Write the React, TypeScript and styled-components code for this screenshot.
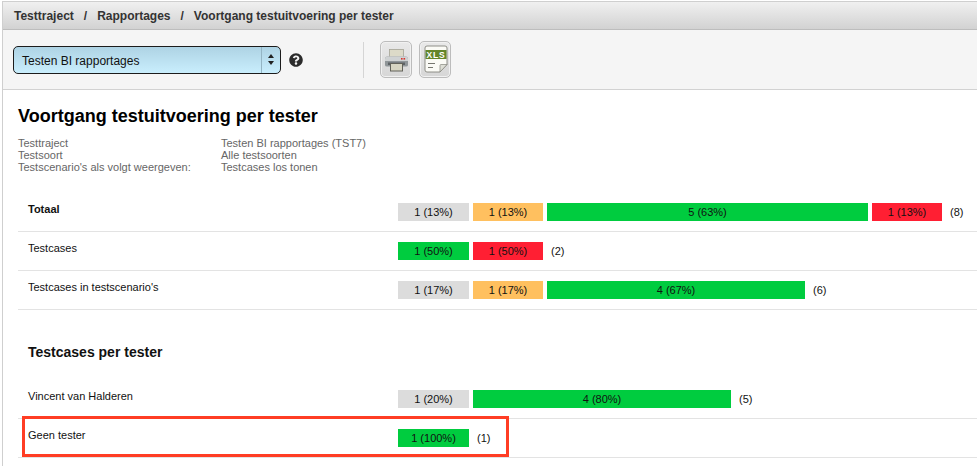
import React from "react";
import styled, { createGlobalStyle } from "styled-components";
import { FaQuestionCircle } from "react-icons/fa";

const Global = createGlobalStyle`
  html, body { margin: 0; padding: 0; background: #fff; }
  body { font-family: "Liberation Sans", Arial, sans-serif; font-size: 11px; color: #111; overflow: hidden; }
`;

const Page = styled.div`
  width: 977px; height: 466px; box-sizing: border-box; position: relative; overflow: hidden;
  padding-left: 2px; padding-top: 1px;
`;
const Frame = styled.div`
  border-left: 1px solid #cfcfcf; border-top: 1px solid #cfcfcf; height: 100%;
`;
const Crumbs = styled.div`
  height: 28px; box-sizing: border-box; display: flex; align-items: center; padding-left: 11px;
  background: linear-gradient(#f0f0f0, #d2d2d2); border-bottom: 1px solid #bdbdbd;
  font-weight: bold; font-size: 12px; color: #333; white-space: pre;
`;
const Sep = styled.span` margin: 0 10px; `;
const Toolbar = styled.div`
  height: 60px; box-sizing: border-box; background: #f5f5f5; border-bottom: 1px solid #d2d2d2;
  display: flex; align-items: center; padding-left: 10px;
`;
const Select = styled.div`
  width: 268px; height: 28px; box-sizing: border-box; border: 1px solid #1c1c1c; border-radius: 5px;
  background: linear-gradient(#aed3e4, #c9eefd); display: flex; align-items: stretch;
  font-size: 12px; color: #111;
`;
const SelectText = styled.div` flex: 1; display: flex; align-items: center; padding: 2px 0 0 8px; `;
const SelectArrows = styled.div`
  width: 18px; border-left: 1px solid #94b5c4; display: flex; align-items: center; justify-content: center;
`;
const Help = styled.div`
  margin-left: 8px; width: 14px; height: 14px; color: #2b2b2b; display: flex; font-size: 14px;
`;
const Divider = styled.div` width: 1px; height: 36px; background: #d5d5d5; margin: 0 16px 0 60px; `;
const IconButton = styled.div`
  width: 32px; height: 37px; box-sizing: border-box; margin-right: 7px; border: 1px solid #bcbcbc; border-radius: 5px;
  background: linear-gradient(#e9e9e9, #d6d6d6); box-shadow: inset 0 0 0 1px #f1f1f1;
  display: flex; align-items: center; justify-content: center;
`;
const Content = styled.div` padding: 0 0 0 15px; `;
const Title = styled.h1`
  margin: 15px 0 0; font-size: 18px; line-height: 22px; font-weight: bold; color: #000;
`;
const Meta = styled.div`
  margin-top: 10px; display: grid; grid-template-columns: 203px 1fr; font-size: 11px; line-height: 12px; color: #666;
`;
const Rows = styled.div` margin-top: 20px; `;
const Row = styled.div`
  height: 39px; box-sizing: border-box; display: flex; align-items: flex-start; padding-top: 10px;
  border-bottom: 1px solid #e3e3e3;
`;
const RowLabel = styled.div<{ $bold?: boolean }>`
  width: 370px; flex: none; padding-left: 10px; line-height: 12px; font-size: 11px; color: #111;
  font-weight: ${p => (p.$bold ? "bold" : "normal")};
`;
const Bars = styled.div` display: flex; gap: 4px; align-items: center; height: 18px; `;
const colors = { gray: "#dcdcdc", orange: "#ffc05f", green: "#00cc3f", red: "#ff1f33" };
const Bar = styled.div<{ $c: keyof typeof colors; $w: number }>`
  width: ${p => p.$w}px; height: 18px; background: ${p => colors[p.$c]}; color: #111;
  display: flex; align-items: center; justify-content: center; font-size: 11px;
`;
const Count = styled.div` margin-left: 4px; font-size: 11px; color: #111; `;
const SectionTitle = styled.h2`
  margin: 33px 0 19px 10px; font-size: 14px; line-height: 18px; font-weight: bold; color: #111;
`;
const Highlight = styled.div`
  position: absolute; left: 22px; top: 416px; width: 487px; height: 41px; box-sizing: border-box;
  border: 3px solid #ff3d24; pointer-events: none;
`;

type Seg = [keyof typeof colors, number, string];
const BarRow = ({ label, bold, segs, total }: { label: string; bold?: boolean; segs: Seg[]; total: string }) => (
  <Row>
    <RowLabel $bold={bold}>{label}</RowLabel>
    <Bars>
      {segs.map(([c, w, t], i) => <Bar key={i} $c={c} $w={w}>{t}</Bar>)}
      <Count>{total}</Count>
    </Bars>
  </Row>
);

const Arrows = () => (
  <svg width="6" height="11" viewBox="0 0 6 11"><path d="M3 0 L6 4 H0 Z M0 7 H6 L3 11 Z" fill="#222" /></svg>
);
const PrinterIcon = () => (
  <svg width="24" height="24" viewBox="0 0 24 24">
    <rect x="5.500" y="1.500" width="14" height="8" fill="#dcdac8" stroke="#a5a396" strokeWidth="0.8" />
    <path d="M3 8.500 H22 Q24 8.500 24 11 V17 Q24 18.500 22 18.500 H3 Q1 18.500 1 17 V11 Q1 8.500 3 8.500 Z" fill="#8f9598" />
    <path d="M3 8.500 H22 Q24 8.500 24 11 V13 H1 V11 Q1 8.500 3 8.500 Z" fill="#cfd2d3" />
    <rect x="4" y="14.500" width="17" height="2.500" fill="#5e6366" />
    <rect x="6.500" y="15.500" width="12" height="7.500" fill="#d6d4c2" stroke="#62625a" strokeWidth="1" />
    <rect x="17" y="10" width="1.600" height="1.600" fill="#d8352c" />
    <rect x="19.500" y="10" width="1.600" height="1.600" fill="#d8352c" />
  </svg>
);
const XlsIcon = () => (
  <svg width="26" height="29" viewBox="0 0 26 29">
    <path d="M5 1 H23 Q25 1 25 3 V19.500 L18 27 H5 Q3 27 3 25 V3 Q3 1 5 1 Z" fill="#fbfbf6" stroke="#85857d" strokeWidth="0.9" />
    <rect x="3.500" y="5" width="21" height="9" fill="#64862a" />
    <text x="14" y="12.800" textAnchor="middle" fontFamily="Liberation Sans, sans-serif" fontWeight="bold" fontSize="8.500" letterSpacing="0.8" fill="#fff">XLS</text>
    <path d="M6 18.500 H13 M6 22.500 H11" stroke="#77776f" strokeWidth="1" />
    <path d="M25 19.500 H19 Q18 19.500 18 20.500 V27 Z" fill="#dedfd6" stroke="#85857d" strokeWidth="0.7" />
  </svg>
);

export default function App() {
  return (
    <Page>
      <Global />
      <Frame>
        <Crumbs>Testtraject<Sep>/</Sep>Rapportages<Sep>/</Sep>Voortgang testuitvoering per tester</Crumbs>
        <Toolbar>
          <Select>
            <SelectText>Testen BI rapportages</SelectText>
            <SelectArrows><Arrows /></SelectArrows>
          </Select>
          <Help><FaQuestionCircle /></Help>
          <Divider />
          <IconButton><PrinterIcon /></IconButton>
          <IconButton><XlsIcon /></IconButton>
        </Toolbar>
        <Content>
          <Title>Voortgang testuitvoering per tester</Title>
          <Meta>
            <div>Testtraject</div><div>Testen BI rapportages (TST7)</div>
            <div>Testsoort</div><div>Alle testsoorten</div>
            <div>Testscenario's als volgt weergeven:</div><div>Testcases los tonen</div>
          </Meta>
          <Rows>
            <BarRow label="Totaal" bold total="(8)" segs={[["gray", 71, "1 (13%)"], ["orange", 70, "1 (13%)"], ["green", 321, "5 (63%)"], ["red", 70, "1 (13%)"]]} />
            <BarRow label="Testcases" total="(2)" segs={[["green", 71, "1 (50%)"], ["red", 70, "1 (50%)"]]} />
            <BarRow label="Testcases in testscenario's" total="(6)" segs={[["gray", 71, "1 (17%)"], ["orange", 70, "1 (17%)"], ["green", 258, "4 (67%)"]]} />
          </Rows>
          <SectionTitle>Testcases per tester</SectionTitle>
          <BarRow label="Vincent van Halderen" total="(5)" segs={[["gray", 71, "1 (20%)"], ["green", 258, "4 (80%)"]]} />
          <BarRow label="Geen tester" total="(1)" segs={[["green", 71, "1 (100%)"]]} />
        </Content>
      </Frame>
      <Highlight />
    </Page>
  );
}
